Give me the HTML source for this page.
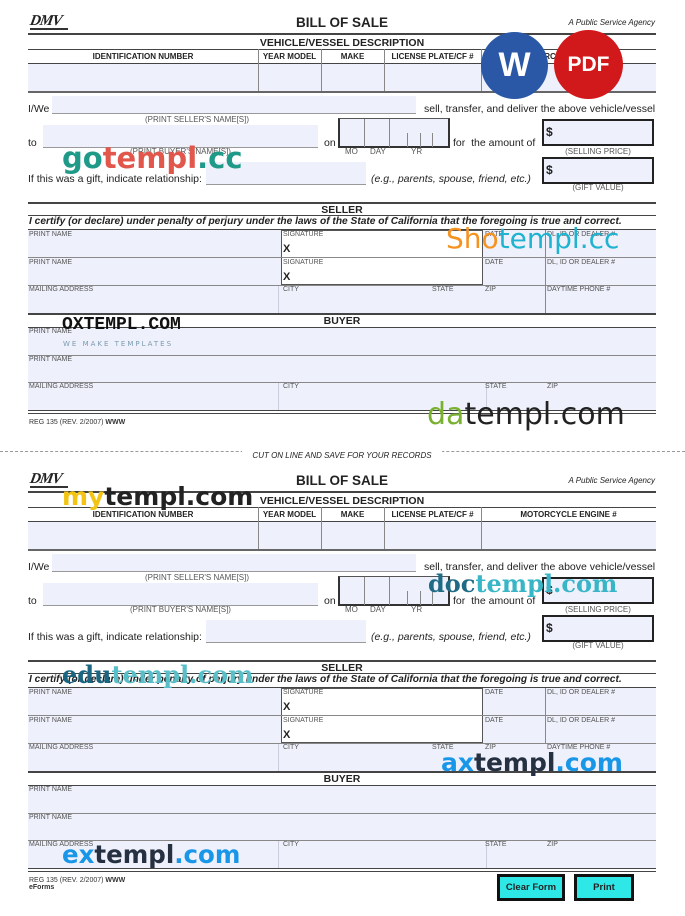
<!DOCTYPE html>
<html><head><meta charset="utf-8"><style>
*{margin:0;padding:0;box-sizing:border-box}
body{width:685px;height:904px;background:#fff;position:relative;overflow:hidden;font-family:"Liberation Sans",Arial,sans-serif;color:#222}
.a{position:absolute}
.c{position:absolute;left:0;width:685px;height:458px}
.hl{position:absolute;left:28px;width:628px;background:#444}
.b{font-weight:bold}
.fl{position:absolute;background:#eef0fb}
.lb{position:absolute;font-size:7px;color:#555;white-space:nowrap}
.sm{font-size:8px!important}
.ch{font-size:8px!important;color:#222!important;font-weight:bold}
.t9{position:absolute;font-size:10.5px;white-space:nowrap}
.vl{position:absolute;width:1px;background:#888}
.wm{position:absolute;font-family:"DejaVu Sans",sans-serif;white-space:nowrap;line-height:1}
.h{position:absolute;left:242px;width:200px;text-align:center;font-weight:bold;font-size:10.5px;white-space:nowrap}
</style></head><body>

<!-- COPY 1 -->
<div class="c" style="top:0">
<div class="a b" style="left:30px;top:13px;font-size:15px;font-style:italic;letter-spacing:-1px;font-family:'Liberation Serif',serif;transform:skewX(-10deg);color:#222">DMV</div>
<div class="a" style="left:30px;top:28px;width:38px;height:2px;background:#333"></div>
<div class="a b" style="left:242px;width:200px;text-align:center;top:15px;font-size:13.5px">BILL OF SALE</div>
<div class="a" style="right:30px;top:18px;font-size:8px;font-style:italic">A Public Service Agency</div>
<div class="hl" style="top:33px;height:2px"></div>
<div class="h" style="top:37px">VEHICLE/VESSEL DESCRIPTION</div>
<div class="hl" style="top:49px;height:1px"></div>
<div class="lb ch" style="left:28px;width:230px;text-align:center;top:52px">IDENTIFICATION NUMBER</div>
<div class="lb ch" style="left:258px;width:63px;text-align:center;top:52px">YEAR MODEL</div>
<div class="lb ch" style="left:321px;width:63px;text-align:center;top:52px">MAKE</div>
<div class="lb ch" style="left:384px;width:97px;text-align:center;top:52px">LICENSE PLATE/CF #</div>
<div class="lb ch" style="left:481px;width:175px;text-align:center;top:52px">MOTORCYCLE ENGINE #</div>
<div class="hl" style="top:63px;height:1px"></div>
<div class="fl" style="left:28px;top:64px;width:628px;height:27px"></div>
<div class="vl" style="left:258px;top:49px;height:42px"></div>
<div class="vl" style="left:321px;top:49px;height:42px"></div>
<div class="vl" style="left:384px;top:49px;height:42px"></div>
<div class="vl" style="left:481px;top:49px;height:42px"></div>
<div class="hl" style="top:91px;height:2px;background:#666"></div>

<div class="t9" style="left:28px;top:103px">I/We</div>
<div class="fl" style="left:52px;top:96px;width:364px;height:18px;border-bottom:1px solid #999"></div>
<div class="t9" style="left:424px;top:103px">sell, transfer, and deliver the above vehicle/vessel</div>
<div class="lb sm" style="left:52px;width:290px;text-align:center;top:115px">(PRINT SELLER'S NAME[S])</div>
<div class="t9" style="left:28px;top:137px">to</div>
<div class="fl" style="left:43px;top:125px;width:275px;height:23px;border-bottom:1px solid #999"></div>
<div class="lb sm" style="left:43px;width:275px;text-align:center;top:147px">(PRINT BUYER'S NAME[S])</div>
<div class="t9" style="left:324px;top:137px">on</div>
<div class="a" style="left:338px;top:118px;width:112px;height:30px;border:2px solid #333;border-top:1px solid #555;background:#eef0fb"></div>
<div class="vl" style="left:364px;top:119px;height:28px"></div>
<div class="vl" style="left:389px;top:119px;height:28px"></div>
<div class="vl" style="left:407px;top:133px;height:14px"></div>
<div class="vl" style="left:420px;top:133px;height:14px"></div>
<div class="vl" style="left:432px;top:133px;height:14px"></div>
<div class="lb sm" style="left:345px;top:147px">MO</div>
<div class="lb sm" style="left:370px;top:147px">DAY</div>
<div class="lb sm" style="left:411px;top:147px">YR</div>
<div class="t9" style="left:453px;top:137px">for &nbsp;the amount of</div>
<div class="a" style="left:542px;top:119px;width:112px;height:27px;border:2px solid #222;background:#eef0fb"></div>
<div class="a b" style="left:546px;top:125px;font-size:12px">$</div>
<div class="lb sm" style="left:542px;width:112px;text-align:center;top:147px">(SELLING PRICE)</div>
<div class="t9" style="left:28px;top:173px">If this was a gift, indicate relationship:</div>
<div class="fl" style="left:206px;top:162px;width:160px;height:23px;border-bottom:1px solid #999"></div>
<div class="t9" style="left:371px;top:173px;font-style:italic">(e.g., parents, spouse, friend, etc.)</div>
<div class="a" style="left:542px;top:157px;width:112px;height:27px;border:2px solid #222;background:#eef0fb"></div>
<div class="a b" style="left:546px;top:163px;font-size:12px">$</div>
<div class="lb sm" style="left:542px;width:112px;text-align:center;top:183px">(GIFT VALUE)</div>

<div class="hl" style="top:202px;height:1.5px"></div>
<div class="h" style="top:204px">SELLER</div>
<div class="hl" style="top:215px;height:1px"></div>
<div class="a b" style="left:29px;top:216px;font-size:10.2px;font-style:italic;white-space:nowrap">I certify (or declare) under penalty of perjury under the laws of the State of California that the foregoing is true and correct.</div>
<div class="hl" style="top:229px;height:1px"></div>
<div class="fl" style="left:28px;top:230px;width:628px;height:83px"></div>
<div class="a" style="left:281px;top:230px;width:202px;height:55px;background:#fff;border:1px solid #555"></div>
<div class="hl" style="top:257px;height:1px;background:#888"></div>
<div class="hl" style="top:285px;height:1px;background:#888"></div>
<div class="vl" style="left:545px;top:230px;height:83px"></div>
<div class="vl" style="left:278px;top:286px;height:27px;background:#ccd"></div>
<div class="lb" style="left:29px;top:231px">PRINT NAME</div>
<div class="lb" style="left:283px;top:231px">SIGNATURE</div>
<div class="a b" style="left:283px;top:243px;font-size:11px">X</div>
<div class="lb" style="left:485px;top:231px">DATE</div>
<div class="lb" style="left:547px;top:231px">DL, ID OR DEALER #</div>
<div class="lb" style="left:29px;top:259px">PRINT NAME</div>
<div class="lb" style="left:283px;top:259px">SIGNATURE</div>
<div class="a b" style="left:283px;top:271px;font-size:11px">X</div>
<div class="lb" style="left:485px;top:259px">DATE</div>
<div class="lb" style="left:547px;top:259px">DL, ID OR DEALER #</div>
<div class="lb" style="left:29px;top:286px">MAILING ADDRESS</div>
<div class="lb" style="left:283px;top:286px">CITY</div>
<div class="lb" style="left:432px;top:286px">STATE</div>
<div class="lb" style="left:485px;top:286px">ZIP</div>
<div class="lb" style="left:547px;top:286px">DAYTIME PHONE #</div>
<div class="hl" style="top:313px;height:1.5px"></div>
<div class="h" style="top:315px">BUYER</div>
<div class="hl" style="top:327px;height:1px"></div>
<div class="fl" style="left:28px;top:328px;width:628px;height:82px"></div>
<div class="hl" style="top:355px;height:1px;background:#888"></div>
<div class="hl" style="top:382px;height:1px;background:#888"></div>
<div class="vl" style="left:278px;top:383px;height:27px;background:#ccd"></div>
<div class="vl" style="left:486px;top:383px;height:27px;background:#ccd"></div>
<div class="lb" style="left:29px;top:328px">PRINT NAME</div>
<div class="lb" style="left:29px;top:356px">PRINT NAME</div>
<div class="lb" style="left:29px;top:383px">MAILING ADDRESS</div>
<div class="lb" style="left:283px;top:383px">CITY</div>
<div class="lb" style="left:485px;top:383px">STATE</div>
<div class="lb" style="left:547px;top:383px">ZIP</div>
<div class="hl" style="top:410px;height:1px"></div>
<div class="hl" style="top:413px;height:1px"></div>
<div class="lb" style="left:29px;top:419px;color:#333">REG 135 (REV. 2/2007) <b>WWW</b></div>
</div>

<div class="a" style="left:0;top:451px;width:685px;border-top:1px dashed #999"></div>
<div class="a" style="left:242px;width:200px;text-align:center;top:451px;font-size:8px;font-style:italic;background:#fff;white-space:nowrap">CUT ON LINE AND SAVE FOR YOUR RECORDS</div>

<!-- COPY 2 -->
<div class="c" style="top:458px">
<div class="a b" style="left:30px;top:13px;font-size:15px;font-style:italic;letter-spacing:-1px;font-family:'Liberation Serif',serif;transform:skewX(-10deg);color:#222">DMV</div>
<div class="a" style="left:30px;top:28px;width:38px;height:2px;background:#333"></div>
<div class="a b" style="left:242px;width:200px;text-align:center;top:15px;font-size:13.5px">BILL OF SALE</div>
<div class="a" style="right:30px;top:18px;font-size:8px;font-style:italic">A Public Service Agency</div>
<div class="hl" style="top:33px;height:2px"></div>
<div class="h" style="top:37px">VEHICLE/VESSEL DESCRIPTION</div>
<div class="hl" style="top:49px;height:1px"></div>
<div class="lb ch" style="left:28px;width:230px;text-align:center;top:52px">IDENTIFICATION NUMBER</div>
<div class="lb ch" style="left:258px;width:63px;text-align:center;top:52px">YEAR MODEL</div>
<div class="lb ch" style="left:321px;width:63px;text-align:center;top:52px">MAKE</div>
<div class="lb ch" style="left:384px;width:97px;text-align:center;top:52px">LICENSE PLATE/CF #</div>
<div class="lb ch" style="left:481px;width:175px;text-align:center;top:52px">MOTORCYCLE ENGINE #</div>
<div class="hl" style="top:63px;height:1px"></div>
<div class="fl" style="left:28px;top:64px;width:628px;height:27px"></div>
<div class="vl" style="left:258px;top:49px;height:42px"></div>
<div class="vl" style="left:321px;top:49px;height:42px"></div>
<div class="vl" style="left:384px;top:49px;height:42px"></div>
<div class="vl" style="left:481px;top:49px;height:42px"></div>
<div class="hl" style="top:91px;height:2px;background:#666"></div>

<div class="t9" style="left:28px;top:103px">I/We</div>
<div class="fl" style="left:52px;top:96px;width:364px;height:18px;border-bottom:1px solid #999"></div>
<div class="t9" style="left:424px;top:103px">sell, transfer, and deliver the above vehicle/vessel</div>
<div class="lb sm" style="left:52px;width:290px;text-align:center;top:115px">(PRINT SELLER'S NAME[S])</div>
<div class="t9" style="left:28px;top:137px">to</div>
<div class="fl" style="left:43px;top:125px;width:275px;height:23px;border-bottom:1px solid #999"></div>
<div class="lb sm" style="left:43px;width:275px;text-align:center;top:147px">(PRINT BUYER'S NAME[S])</div>
<div class="t9" style="left:324px;top:137px">on</div>
<div class="a" style="left:338px;top:118px;width:112px;height:30px;border:2px solid #333;border-top:1px solid #555;background:#eef0fb"></div>
<div class="vl" style="left:364px;top:119px;height:28px"></div>
<div class="vl" style="left:389px;top:119px;height:28px"></div>
<div class="vl" style="left:407px;top:133px;height:14px"></div>
<div class="vl" style="left:420px;top:133px;height:14px"></div>
<div class="vl" style="left:432px;top:133px;height:14px"></div>
<div class="lb sm" style="left:345px;top:147px">MO</div>
<div class="lb sm" style="left:370px;top:147px">DAY</div>
<div class="lb sm" style="left:411px;top:147px">YR</div>
<div class="t9" style="left:453px;top:137px">for &nbsp;the amount of</div>
<div class="a" style="left:542px;top:119px;width:112px;height:27px;border:2px solid #222;background:#eef0fb"></div>
<div class="a b" style="left:546px;top:125px;font-size:12px">$</div>
<div class="lb sm" style="left:542px;width:112px;text-align:center;top:147px">(SELLING PRICE)</div>
<div class="t9" style="left:28px;top:173px">If this was a gift, indicate relationship:</div>
<div class="fl" style="left:206px;top:162px;width:160px;height:23px;border-bottom:1px solid #999"></div>
<div class="t9" style="left:371px;top:173px;font-style:italic">(e.g., parents, spouse, friend, etc.)</div>
<div class="a" style="left:542px;top:157px;width:112px;height:27px;border:2px solid #222;background:#eef0fb"></div>
<div class="a b" style="left:546px;top:163px;font-size:12px">$</div>
<div class="lb sm" style="left:542px;width:112px;text-align:center;top:183px">(GIFT VALUE)</div>

<div class="hl" style="top:202px;height:1.5px"></div>
<div class="h" style="top:204px">SELLER</div>
<div class="hl" style="top:215px;height:1px"></div>
<div class="a b" style="left:29px;top:216px;font-size:10.2px;font-style:italic;white-space:nowrap">I certify (or declare) under penalty of perjury under the laws of the State of California that the foregoing is true and correct.</div>
<div class="hl" style="top:229px;height:1px"></div>
<div class="fl" style="left:28px;top:230px;width:628px;height:83px"></div>
<div class="a" style="left:281px;top:230px;width:202px;height:55px;background:#fff;border:1px solid #555"></div>
<div class="hl" style="top:257px;height:1px;background:#888"></div>
<div class="hl" style="top:285px;height:1px;background:#888"></div>
<div class="vl" style="left:545px;top:230px;height:55px"></div>
<div class="vl" style="left:278px;top:286px;height:27px;background:#ccd"></div>
<div class="lb" style="left:29px;top:231px">PRINT NAME</div>
<div class="lb" style="left:283px;top:231px">SIGNATURE</div>
<div class="a b" style="left:283px;top:243px;font-size:11px">X</div>
<div class="lb" style="left:485px;top:231px">DATE</div>
<div class="lb" style="left:547px;top:231px">DL, ID OR DEALER #</div>
<div class="lb" style="left:29px;top:259px">PRINT NAME</div>
<div class="lb" style="left:283px;top:259px">SIGNATURE</div>
<div class="a b" style="left:283px;top:271px;font-size:11px">X</div>
<div class="lb" style="left:485px;top:259px">DATE</div>
<div class="lb" style="left:547px;top:259px">DL, ID OR DEALER #</div>
<div class="lb" style="left:29px;top:286px">MAILING ADDRESS</div>
<div class="lb" style="left:283px;top:286px">CITY</div>
<div class="lb" style="left:432px;top:286px">STATE</div>
<div class="lb" style="left:485px;top:286px">ZIP</div>
<div class="lb" style="left:547px;top:286px">DAYTIME PHONE #</div>
<div class="hl" style="top:313px;height:1.5px"></div>
<div class="h" style="top:315px">BUYER</div>
<div class="hl" style="top:327px;height:1px"></div>
<div class="fl" style="left:28px;top:328px;width:628px;height:82px"></div>
<div class="hl" style="top:355px;height:1px;background:#888"></div>
<div class="hl" style="top:382px;height:1px;background:#888"></div>
<div class="vl" style="left:278px;top:383px;height:27px;background:#ccd"></div>
<div class="vl" style="left:486px;top:383px;height:27px;background:#ccd"></div>
<div class="lb" style="left:29px;top:328px">PRINT NAME</div>
<div class="lb" style="left:29px;top:356px">PRINT NAME</div>
<div class="lb" style="left:29px;top:383px">MAILING ADDRESS</div>
<div class="lb" style="left:283px;top:383px">CITY</div>
<div class="lb" style="left:485px;top:383px">STATE</div>
<div class="lb" style="left:547px;top:383px">ZIP</div>
<div class="hl" style="top:410px;height:1px"></div>
<div class="hl" style="top:413px;height:1px"></div>
<div class="lb" style="left:29px;top:419px;color:#333">REG 135 (REV. 2/2007) <b>WWW</b><br><b>eForms</b></div>
</div>

<!-- buttons -->
<div class="a b" style="left:497px;top:874px;width:68px;height:27px;background:#2ee8e8;border:3px solid #111;font-size:9.5px;text-align:center;line-height:21px">Clear Form</div>
<div class="a b" style="left:574px;top:874px;width:60px;height:27px;background:#2ee8e8;border:3px solid #111;font-size:9.5px;text-align:center;line-height:21px">Print</div>

<!-- watermarks -->
<div class="a" style="left:481px;top:32px;width:67px;height:67px;border-radius:50%;background:#2a58a6;color:#fff;font-weight:bold;font-size:34px;text-align:center;line-height:67px">W</div>
<div class="a" style="left:554px;top:30px;width:69px;height:69px;border-radius:50%;background:#d1181b;color:#fff;font-weight:bold;font-size:21px;text-align:center;line-height:69px">PDF</div>
<div class="wm" style="left:62px;top:144px;font-size:29px;color:#1f9a88;font-weight:bold">go<span style="color:#e2574c">templ</span>.cc</div>
<div class="wm" style="left:446px;top:225px;font-size:28px;color:#20b3cf"><span style="color:#f59321">Sho</span>templ.cc</div>
<div class="wm" style="left:62px;top:316px;font-size:18px;font-weight:bold;font-family:'Liberation Mono',monospace;color:#111">OXTEMPL.COM</div>
<div class="wm" style="left:63px;top:341px;font-size:7px;letter-spacing:2px;color:#7a9bb0">WE MAKE TEMPLATES</div>
<div class="wm" style="left:427px;top:400px;font-size:30px;color:#222"><span style="color:#7ab130">da</span>templ.com</div>
<div class="wm" style="left:62px;top:484px;font-size:25px;font-weight:bold;color:#222"><span style="color:#f4c413">my</span>templ.com</div>
<div class="wm" style="left:428px;top:572px;font-size:24px;font-weight:bold;font-family:'DejaVu Serif',serif;color:#1f6b86">doc<span style="color:#38b6c8">templ.com</span></div>
<div class="wm" style="left:62px;top:663px;font-size:24px;font-weight:bold;font-family:'DejaVu Serif',serif;color:#1a6682">edu<span style="color:#58bfc8">templ.com</span></div>
<div class="wm" style="left:441px;top:750px;font-size:25px;font-weight:bold;color:#1896e8">ax<span style="color:#253040">templ</span>.com</div>
<div class="wm" style="left:62px;top:843px;font-size:24.5px;font-weight:bold;color:#1896e8">ex<span style="color:#253040">templ</span>.com</div>
</body></html>
